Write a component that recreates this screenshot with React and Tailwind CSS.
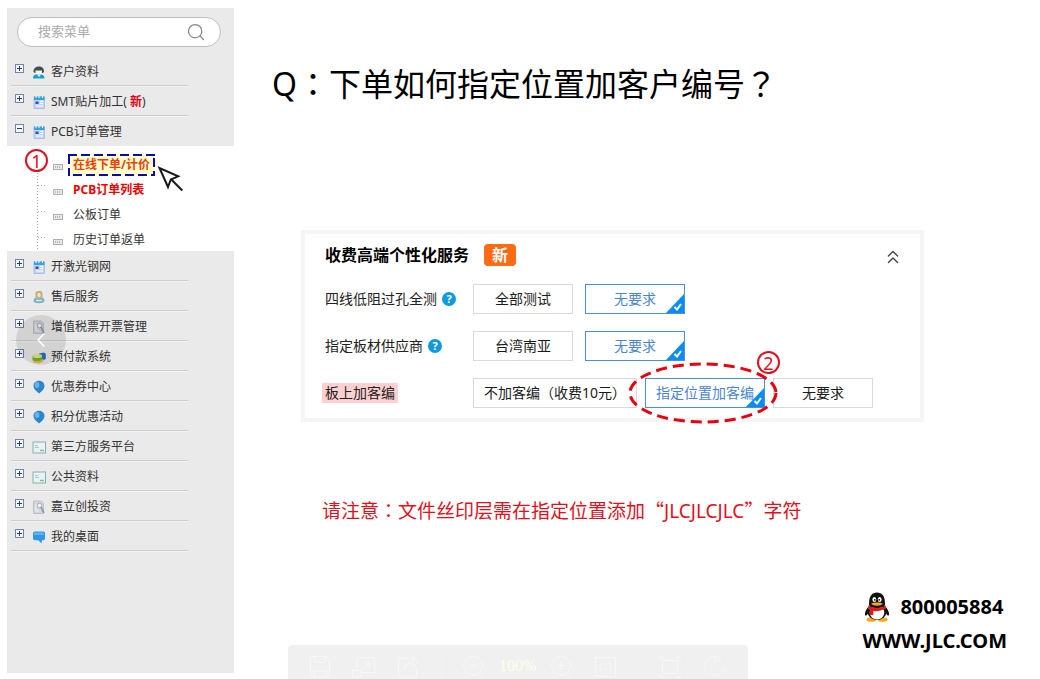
import React, { useState } from "react";
import { ChevronLeft, ChevronsUp, Search } from "lucide-react";

const topMenu = [
  { icon: "user", label: "客户资料" },
  { icon: "order", label: "SMT贴片加工(", isNew: true },
  { icon: "order", label: "PCB订单管理", open: true },
];

const subMenu = [
  { label: "在线下单/计价", style: "font-bold text-[#e8410c]", active: true },
  { label: "PCB订单列表", style: "font-bold text-[#f00000]" },
  { label: "公板订单", style: "text-[#333333]" },
  { label: "历史订单返单", style: "text-[#333333]" },
];

const bottomMenu = [
  { icon: "order", label: "开激光钢网" },
  { icon: "service", label: "售后服务" },
  { icon: "invoice", label: "增值税票开票管理" },
  { icon: "coins", label: "预付款系统" },
  { icon: "balloon", label: "优惠券中心" },
  { icon: "balloon", label: "积分优惠活动" },
  { icon: "card", label: "第三方服务平台" },
  { icon: "card", label: "公共资料" },
  { icon: "invoice", label: "嘉立创投资" },
  { icon: "chat", label: "我的桌面" },
];

const services = [
  {
    label: "四线低阻过孔全测",
    help: true,
    gap: "gap-3",
    options: [
      { text: "全部测试", width: "w-[100px]" },
      { text: "无要求", width: "w-[100px]", selected: true },
    ],
  },
  {
    label: "指定板材供应商",
    help: true,
    gap: "gap-3",
    options: [
      { text: "台湾南亚", width: "w-[100px]" },
      { text: "无要求", width: "w-[100px]", selected: true },
    ],
  },
  {
    label: "板上加客编",
    marked: true,
    gap: "gap-2",
    options: [
      { text: "不加客编（收费10元）", width: "w-[164px]" },
      { text: "指定位置加客编", width: "w-[120px]", selected: true, circled: true },
      { text: "无要求", width: "w-[100px]" },
    ],
  },
];

const MenuIcon = ({ name }) => (
  <svg viewBox="0 0 14 14" className="mt-0.5 h-3.5 w-3.5 shrink-0" aria-hidden="true">
    {name === "user" && (
      <>
        <path d="M1.500 7C1.500 3 4 1.500 7 1.500s5 1.500 5 5l-1 1.500H3z" fill="#4a4a4a" />
        <path d="M3.500 5.500h6.500v2.500c0 1.500-1.200 2.500-3 2.500S3.500 9.500 3.500 8z" fill="#f7f1ec" />
        <path d="M1 13.500c0-3 1.500-4 3-4h5c1.500 0 3.500 1 3.500 4z" fill="#16a0c4" />
        <path d="M5 9.500h4L7 12z" fill="#e8f6fa" />
      </>
    )}
    {name === "order" && (
      <>
        <rect x="2" y="2" width="10.500" height="11.500" fill="#c3d6f4" stroke="#93a7d6" strokeWidth=".6" />
        <rect x="2" y="1.500" width="10.500" height="3.500" fill="#35a5e2" />
        <path d="M4 .5v2.500M7 .5v2.500M10.500 .5v2.500" stroke="#f2fbff" strokeWidth="1" />
        <rect x="3.500" y="6.500" width="3" height="2.500" fill="#3a48c8" />
        <path d="M8 6.500h3M8 8.500h3M4 11h7" stroke="#fff" strokeWidth="1" />
      </>
    )}
    {name === "service" && (
      <>
        <path d="M1.500 11c0-3 2-4 5.500-4s5.500 1 5.500 4c0 3-11 3-11 0z" fill="#7fb3c8" />
        <rect x="3.500" y="1" width="7" height="8" rx="2.600" fill="#c2ae80" />
        <rect x="5.500" y="3" width="3" height="4" rx="1" fill="#efe6ce" />
        <path d="M4 10.500h6" stroke="#d4edf4" strokeWidth="1.200" />
      </>
    )}
    {name === "invoice" && (
      <>
        <path d="M1.500 1h8l2 2v10.500h-10z" fill="#d3d6da" stroke="#b4b8bd" strokeWidth=".8" />
        <path d="M4 4v7M4 11h3" stroke="#f4f6f8" strokeWidth="1" />
        <circle cx="7.500" cy="5.500" r="2.300" fill="#eef2f6" stroke="#9ba6b3" strokeWidth=".9" />
        <path d="M9 7l3 6" stroke="#8494a8" strokeWidth="1.600" />
      </>
    )}
    {name === "coins" && (
      <>
        <path d="M7 3.500L12 2.500l1.800 1.500v5L9 11z" fill="#2672c8" />
        <ellipse cx="6" cy="10.500" rx="5.500" ry="2.800" fill="#f0bd38" />
        <path d="M.5 6v3.500c1 2 8 2 9.500 0V6z" fill="#6fb53e" />
        <ellipse cx="5.300" cy="6" rx="4.800" ry="2" fill="#dbe98a" />
      </>
    )}
    {name === "balloon" && (
      <>
        <path d="M7 .8c3.300 0 5.500 2.300 5.500 5.300 0 3-2.500 5-4 6.200L7 13.600l-1.400-1.300C4 11 1.500 9 1.500 6.100 1.500 3.100 3.700.8 7 .8z" fill="#2c86ca" />
        <ellipse cx="5" cy="5" rx="2.400" ry="3" fill="#62b4e8" />
      </>
    )}
    {name === "card" && (
      <>
        <rect x="1" y="2" width="12.500" height="11" fill="#e9f3f2" stroke="#8aaeb0" strokeWidth="1" />
        <path d="M3 5.500h3M3 7.500h4" stroke="#a9c2d4" strokeWidth="1" />
        <path d="M8 10.500h4" stroke="#83c07c" strokeWidth="1.500" />
      </>
    )}
    {name === "chat" && (
      <>
        <path d="M3 1.500h8.500c1 0 1.500.8 1.500 1.800v5c0 1.200-.6 1.900-1.700 1.900H10l-.6 3.300-3-3.300H3c-1.200 0-2-.8-2-2V3.500c0-1.200.8-2 2-2z" fill="#2e96e6" />
        <path d="M2 5V3.700c0-.8.5-1.200 1.200-1.200h8c.6 0 .9.400.9 1V5z" fill="#5bb5f2" />
      </>
    )}
  </svg>
);

const MenuRow = ({ item }) => (
  <li
    className={`mr-[46px] ml-1 flex h-[30px] items-center border-b pl-1 ${
      item.open ? "border-transparent" : "border-[#cdcdcd] shadow-[0_1px_0_#f4f4f4]"
    }`}
  >
    <svg viewBox="0 0 9 9" className="mr-2 mb-1 h-[9px] w-[9px] shrink-0" aria-hidden="true">
      <rect x=".5" y=".5" width="8" height="8" fill="#f4f8fc" stroke="#6d87a8" />
      <path d={item.open ? "M2 4.500h5" : "M2 4.500h5M4.500 2v5"} stroke="#23406e" />
    </svg>
    <MenuIcon name={item.icon} />
    <a href="#" className="ml-[5px] pt-0.5 text-xs whitespace-nowrap text-[#333333]">
      {item.label}
      {item.isNew && (
        <>
          {" "}
          <b className="text-[#e60012]">新</b>)
        </>
      )}
    </a>
  </li>
);

const StepNumber = ({ children, className }) => (
  <span
    className={`absolute flex h-[23px] w-[23px] items-center justify-center rounded-full border-2 border-[#e0101c] text-lg leading-none text-[#e0101c] ${className}`}
  >
    {children}
  </span>
);

const SubMenu = () => (
  <div className="relative flex bg-white pt-2 pl-[30px]">
    <svg viewBox="0 0 12 97" className="h-[97px] w-3 shrink-0" aria-hidden="true">
      <path
        d="M.5 16v80M1 31.500h9M1 57.500h9M1 83.500h9"
        fill="none"
        stroke="#aaaaaa"
        strokeDasharray="1 2"
      />
    </svg>
    <ul className="flex flex-col gap-[3px] pl-1">
      {subMenu.map((item) => (
        <li key={item.label} className="flex h-[22px] items-center">
          <svg viewBox="0 0 10 6" className="mt-1 mr-[5px] h-1.5 w-2.5" aria-hidden="true">
            <rect x=".5" y=".5" width="9" height="5" fill="#e8e8e8" stroke="#b0b0b0" />
            <path d="M2 3h5" stroke="#8a8a8a" strokeDasharray="1 1" />
          </svg>
          <a
            href="#"
            className={`relative flex h-[22px] items-center px-[5px] text-xs whitespace-nowrap ${item.style} ${
              item.active ? "bg-[#ffffcc]" : ""
            }`}
          >
            {item.label}
            {item.active && (
              <svg className="absolute inset-0 h-full w-full" aria-hidden="true">
                <rect
                  x="0"
                  y="0"
                  width="100%"
                  height="100%"
                  fill="none"
                  stroke="#0a0aa8"
                  strokeWidth="4"
                  strokeDasharray="9 4"
                />
              </svg>
            )}
          </a>
        </li>
      ))}
    </ul>
    <StepNumber className="top-[3px] left-[18px]">1</StepNumber>
    <svg
      viewBox="0 0 26 26"
      className="absolute top-5 left-[151px] h-[26px] w-[26px]"
      fill="#ffffff"
      stroke="#1a1a1a"
      strokeWidth="2"
      aria-hidden="true"
    >
      <path d="M1.500 2l8.500 19 2.800-7.500 7.400-3.200z" />
      <path d="M12.800 13l11.500 11.500" />
    </svg>
  </div>
);

const Sidebar = () => (
  <aside className="w-[227px] shrink-0 bg-[#eaeaea] pt-[9px]">
    <form
      className="mr-[13px] mb-[9px] ml-2.5 flex h-[30px] items-center rounded-full border border-[#bdbdbd] bg-white pr-3.5 pl-5"
      onSubmit={(e) => e.preventDefault()}
    >
      <input
        type="text"
        aria-label="搜索菜单"
        placeholder="搜索菜单"
        className="min-w-0 flex-1 bg-transparent text-[13px] outline-none placeholder:text-[#aaaaaa]"
      />
      <button type="submit" aria-label="搜索">
        <Search className="h-5 w-5 text-[#888888]" strokeWidth={1.5} />
      </button>
    </form>
    <nav>
      <ul>
        {topMenu.map((item) => (
          <MenuRow key={item.label} item={item} />
        ))}
      </ul>
      <SubMenu />
      <ul>
        {bottomMenu.map((item) => (
          <MenuRow key={item.label} item={item} />
        ))}
      </ul>
    </nav>
  </aside>
);

const Option = ({ option, onSelect }) => (
  <div className="relative">
    <button
      type="button"
      onClick={onSelect}
      aria-pressed={!!option.selected}
      className={`relative h-[30px] border bg-white text-sm whitespace-nowrap ${option.width} ${
        option.selected ? "border-[#4a90d9] text-[#4a86d0]" : "border-[#d9d9d9] text-[#1a1a1a]"
      }`}
    >
      {option.text}
      {option.selected && (
        <svg viewBox="0 0 18 19" className="absolute right-0 bottom-0 h-[19px] w-[18px]" aria-hidden="true">
          <path d="M18 0v19H0z" fill="#0a8cf5" />
          <path d="M8.500 13l2.500 2.500 4-5.500" fill="none" stroke="#ffffff" strokeWidth="2" />
        </svg>
      )}
    </button>
    {option.circled && (
      <>
        <svg
          viewBox="0 0 150 62"
          className="pointer-events-none absolute -top-4 -left-[17px] z-10 h-[62px] w-[150px]"
          aria-hidden="true"
        >
          <ellipse
            cx="75"
            cy="31"
            rx="73"
            ry="29"
            fill="none"
            stroke="#e8000c"
            strokeWidth="3"
            strokeDasharray="11 6"
          />
        </svg>
        <StepNumber className="-top-[27px] -right-[15px] z-10">2</StepNumber>
      </>
    )}
  </div>
);

const ServicePanel = () => {
  const [rows, setRows] = useState(services);

  const select = (rowIndex, optionIndex) => {
    setRows(
      rows.map((row, i) =>
        i !== rowIndex
          ? row
          : { ...row, options: row.options.map((o, j) => ({ ...o, selected: j === optionIndex })) }
      )
    );
  };

  return (
    <section className="mt-[124px] mr-[116px] ml-[67px] border-4 border-[#f5f5f5] bg-white py-2.5 pr-4 pl-[17px]">
      <div className="flex h-[22px] items-center">
        <h2 className="px-[3px] text-base font-bold text-black">收费高端个性化服务</h2>
        <span className="ml-3 flex h-[22px] w-8 items-center justify-center rounded bg-[#ff6a13] text-base font-bold text-white">
          新
        </span>
        <button type="button" aria-label="收起" className="ml-auto pt-1">
          <ChevronsUp className="h-[22px] w-[22px] text-[#444444]" strokeWidth={1.5} />
        </button>
      </div>
      <div className="mt-[18px] flex flex-col gap-[17px]">
        {rows.map((row, i) => (
          <div key={row.label} className="flex items-center">
            <div className="flex w-[151px] shrink-0 items-center">
              <span
                className={`h-5 px-[3px] text-sm whitespace-nowrap text-[#222222] ${
                  row.marked ? "bg-[#ffd0d0]" : ""
                }`}
              >
                {row.label}
              </span>
              {row.help && (
                <button
                  type="button"
                  aria-label="帮助"
                  className="ml-0.5 flex h-3.5 w-3.5 items-center justify-center rounded-full bg-[#0f9ae0] text-[11px] font-bold text-white"
                >
                  ?
                </button>
              )}
            </div>
            <div className={`flex ${row.gap}`}>
              {row.options.map((option, j) => (
                <Option key={option.text} option={option} onSelect={() => select(i, j)} />
              ))}
            </div>
          </div>
        ))}
      </div>
    </section>
  );
};

const Penguin = () => (
  <svg viewBox="0 0 26 30" className="h-[30px] w-[26px]" aria-hidden="true">
    <ellipse cx="7.500" cy="27.500" rx="5" ry="2.300" fill="#f5a81c" />
    <ellipse cx="18.500" cy="27.500" rx="5" ry="2.300" fill="#f5a81c" />
    <path d="M5 14C2.500 17 .5 20 1 23c.5 1.500 2 0 3-1.500zM21 14c2.500 3 4.500 6 4 9-.5 1.500-2 0-3-1.500z" fill="#111" />
    <ellipse cx="13" cy="19.500" rx="9.500" ry="8.500" fill="#111" />
    <ellipse cx="13" cy="20.500" rx="7.300" ry="7" fill="#fff" />
    <path d="M5 12C5 4 8 .5 13 .5S21 4 21 12c0 3-3 4-8 4s-8-1-8-4z" fill="#111" />
    <ellipse cx="10.300" cy="7.500" rx="1.900" ry="2.600" fill="#fff" />
    <ellipse cx="15.700" cy="7.500" rx="1.900" ry="2.600" fill="#fff" />
    <circle cx="10.800" cy="7.800" r=".9" fill="#111" />
    <circle cx="15.200" cy="7.800" r=".9" fill="#111" />
    <path d="M7 11.800c3-1.600 9-1.600 12 0-2 2.600-10 2.600-12 0z" fill="#f5a81c" />
    <path d="M4.500 13.500c4 3.200 13 3.200 17 0l.8 2.600c-4 3-10 3.400-13 2.800v4.300l-3.500-.4.300-4.600c-1-.5-1.800-1.200-2.400-2z" fill="#e21a1a" />
  </svg>
);

const Toolbar = () => (
  <div className="fixed bottom-0 left-[288px] flex h-[34px] w-[460px] items-center rounded-t bg-[#f0f0f0] pt-2">
    <svg viewBox="0 0 460 34" className="absolute inset-0 h-full w-full" fill="none" stroke="#f7f7f7" aria-hidden="true">
      <path d="M22.500 11.500h16l3 3v17.500h-19zM27 11.500v6h10v-6M26 32v-6h12v6" />
      <path d="M69 25V12.500h17.500v15H74M64.500 25.500h9v6.500h-9zM76 23l5-5m-4 0h4v4" />
      <path d="M122 13h-11.500v19h18V23M116 25c0-6 4-9 9-9v-4l5 5-5 5v-4c-4 0-7 2-9 7z" />
      <path d="M153.500 9v25" stroke="#f3f3f3" />
      <circle cx="185" cy="20.500" r="9.500" />
      <path d="M181 20.500h7M192 28l4 4" />
      <circle cx="273" cy="20.500" r="9.500" />
      <path d="M269 20.500h8M273 16.500v8M280 28l4 4" />
      <path d="M307.500 12.500h20v19h-20zM313 18v8M322 18v8M317 19v1M317 24v1" />
      <path d="M374.500 15.500h15v13h-15zM372 15v-3h4M388 12h4v3M392 29v3h-4M376 32h-4v-3" />
      <path d="M433 14a9.500 9.500 0 1 0 3 8M427 10l6 4-6 4z" />
    </svg>
    <span className="ml-[211px] font-['Liberation_Serif',serif] text-base text-[#fdffe6]">100%</span>
  </div>
);

const App = () => {
  return (
    <div className="flex min-h-screen bg-white pt-2 pb-1.5 pl-[7px] font-['Noto_Sans','Noto_Sans_CJK_SC',sans-serif]">
      <Sidebar />
      <main className="flex min-w-0 flex-1 flex-col">
        <h1 className="mt-[50px] ml-[38px] h-12 text-[32px] leading-[48px] whitespace-nowrap text-black">
          Q<span className="font-['Noto_Sans_CJK_TC',sans-serif]">：</span>下单如何指定位置加客户编号
          <span className="font-['Noto_Sans_CJK_TC',sans-serif]">？</span>
        </h1>
        <ServicePanel />
        <p className="mt-[74px] ml-[88px] text-[19px] leading-7 whitespace-nowrap text-[#e0101c]">
          请注意<span className="font-['Noto_Sans_CJK_TC',sans-serif]">：</span>文件丝印层需在指定位置添加
          <span className="font-['Noto_Sans_CJK_SC',sans-serif]">“</span>JLCJLCJLC
          <span className="font-['Noto_Sans_CJK_SC',sans-serif]">”</span>字符
        </p>
        <div className="mt-[67px] mr-[33px] flex flex-col gap-1 self-end text-xl leading-[30px] font-bold text-black">
          <div className="flex items-center gap-2.5 pl-0.5">
            <Penguin />
            <span>800005884</span>
          </div>
          <a href="#">WWW.JLC.COM</a>
        </div>
      </main>
      <button
        type="button"
        aria-label="上一张"
        className="fixed top-1/2 left-4 flex h-[50px] w-[50px] -translate-y-1/2 items-center justify-center rounded-full bg-black/10 text-white"
      >
        <ChevronLeft className="h-6 w-6" strokeWidth={1.5} />
      </button>
      <Toolbar />
    </div>
  );
};

export default App;
